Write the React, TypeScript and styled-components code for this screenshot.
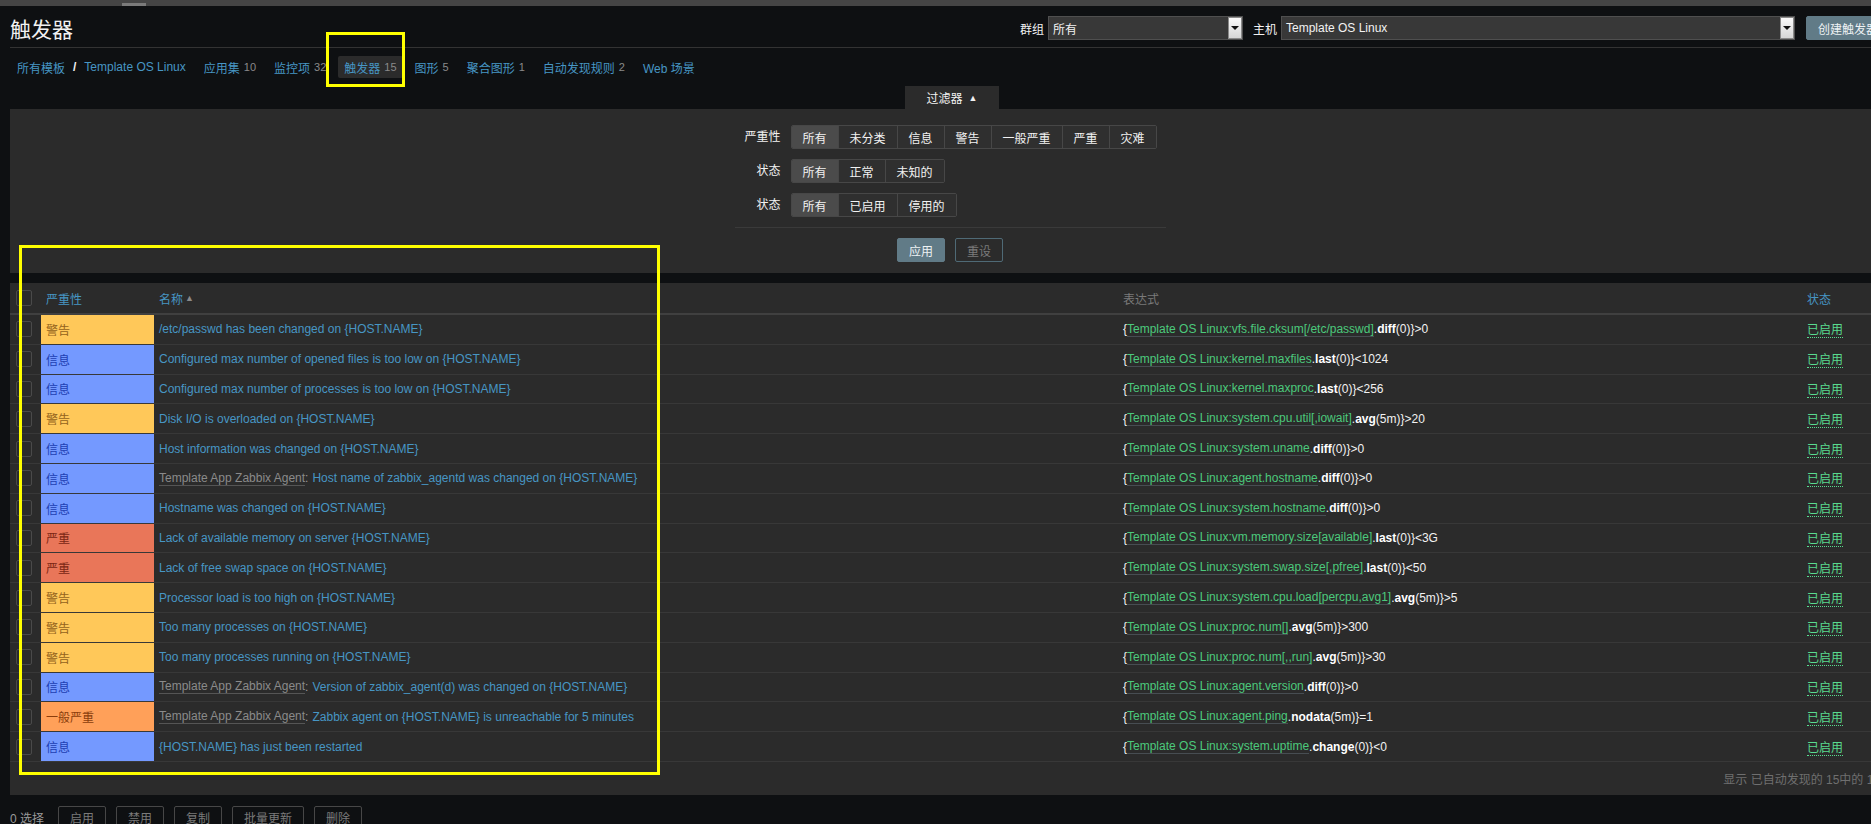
import React from 'react'
import styled, { createGlobalStyle } from 'styled-components'

const GlobalStyle = createGlobalStyle`
  html, body {
    margin: 0;
    padding: 0;
    background: #0e1012;
    overflow: hidden;
  }
  body {
    font-family: 'Liberation Sans', Arial, 'Noto Sans CJK SC', sans-serif;
    font-size: 12px;
    color: #f2f2f2;
  }
`

const Page = styled.div`
  position: relative;
  width: 1900px;
  min-height: 824px;
`

const TopStrip = styled.div`
  display: flex;
  align-items: flex-end;
  height: 6px;
  padding-left: 122px;
  background: #454545;
`

const StripMark = styled.div`
  width: 24px;
  height: 3px;
  background: #7a7a7a;
`

const Header = styled.header`
  display: flex;
  align-items: center;
  justify-content: space-between;
  height: 42px;
  box-sizing: border-box;
  padding-top: 3px;
  margin: 0 10px;
  border-bottom: 1px solid #333;
`

const Title = styled.h1`
  margin: 0;
  font-size: 21px;
  font-weight: normal;
  line-height: 1;
  color: #f2f2f2;
  font-family: 'Noto Sans CJK SC', sans-serif;
`

const Controls = styled.div`
  display: flex;
  align-items: center;
`

const CtrlLabel = styled.span`
  margin: 0 4px 0 10px;
  color: #f2f2f2;
`

const Select = styled.div<{ $w: number }>`
  display: flex;
  align-items: center;
  justify-content: space-between;
  width: ${p => p.$w}px;
  height: 24px;
  box-sizing: border-box;
  background: #383838;
  border: 1px solid #4f4f4f;
  padding-left: 4px;
  color: #f2f2f2;
`

const SelectArrow = styled.span`
  display: flex;
  align-items: center;
  justify-content: center;
  width: 14px;
  height: 22px;
  box-sizing: border-box;
  background: linear-gradient(#fafafa, #d6d6d6);
  border: 1px solid #8a8a8a;

  &::after {
    content: '';
    border-left: 4px solid transparent;
    border-right: 4px solid transparent;
    border-top: 4px solid #111;
  }
`

const PrimaryButton = styled.button`
  height: 24px;
  padding: 0 11px;
  border: 1px solid #617b87;
  border-radius: 2px;
  background: #617b87;
  color: #eef2f4;
  font: inherit;
  white-space: nowrap;
`

const CreateButton = styled(PrimaryButton)`
  margin-left: 11px;
`

const GhostButton = styled.button`
  height: 24px;
  padding: 0 11px;
  border: 1px solid #4f6a76;
  border-radius: 2px;
  background: transparent;
  color: #7a7a7a;
  font: inherit;
`

const Nav = styled.nav`
  display: flex;
  align-items: center;
  height: 22px;
  padding: 8px 10px;
`

const Crumbs = styled.div`
  display: flex;
  align-items: center;
  gap: 8px;
  padding: 0 6px 0 7px;
  margin-right: 6px;
`

const Slash = styled.span`
  color: #f2f2f2;
  font-weight: bold;
`

const NavLink = styled.a`
  color: #4796c4;
  text-decoration: none;
`

const NavItem = styled.div<{ $active?: boolean }>`
  display: flex;
  align-items: center;
  height: 22px;
  padding: 0 6px;
  margin-right: 6px;
  border-radius: 2px;
  background: ${p => (p.$active ? '#2b2b2b' : 'transparent')};
`

const Count = styled.span`
  margin-left: 4px;
  font-size: 11px;
  color: #8a8a8a;
`

const FilterTabRow = styled.div`
  display: flex;
  justify-content: center;
  padding-left: 4px;
`

const FilterTab = styled.div`
  display: flex;
  align-items: center;
  justify-content: center;
  gap: 6px;
  width: 94px;
  height: 23px;
  background: #2b2b2b;
  color: #f2f2f2;
`

const Caret = styled.span`
  font-size: 9px;
`

const FilterPanel = styled.section`
  margin: 0 10px;
  padding: 16px 0 11px;
  background: #2b2b2b;
`

const FilterForm = styled.div`
  display: grid;
  grid-template-columns: 46px 375px;
  column-gap: 10px;
  row-gap: 10px;
  width: 431px;
  margin: 0 auto;
`

const FieldLabel = styled.div`
  line-height: 24px;
  text-align: right;
`

const Segmented = styled.div`
  display: inline-flex;
  justify-self: start;
  height: 24px;
  box-sizing: border-box;
  border: 1px solid #474747;
  border-radius: 2px;
  overflow: hidden;
`

const Segment = styled.span<{ $on?: boolean }>`
  display: flex;
  align-items: center;
  padding: 0 11px;
  background: ${p => (p.$on ? '#4b4b4b' : '#2f2f2f')};
  color: #f2f2f2;

  & + & {
    border-left: 1px solid #474747;
  }
`

const FilterFoot = styled.div`
  display: flex;
  justify-content: center;
  gap: 10px;
  width: 431px;
  margin: 10px auto 0;
  padding-top: 10px;
  border-top: 1px solid #3a3a3a;
`

const TablePanel = styled.section`
  margin: 10px 10px 0;
  background: #2b2b2b;
`

const cols = '31px 113px 964px 684px 1fr'

const HeadRow = styled.div`
  display: grid;
  grid-template-columns: ${cols};
  align-items: center;
  height: 32px;
  box-sizing: border-box;
  border-bottom: 2px solid #404040;
`

const Row = styled.div`
  display: grid;
  grid-template-columns: ${cols};
  align-items: stretch;
  height: 29.8px;
  box-sizing: border-box;
  border-bottom: 1px solid #383838;
`

const Cell = styled.div`
  display: flex;
  align-items: center;
  padding-left: 5px;
  white-space: nowrap;
  overflow: hidden;
`

const CheckCell = styled.div`
  display: flex;
  align-items: center;
  padding-left: 6px;
`

const Checkbox = styled.span`
  width: 16px;
  height: 16px;
  box-sizing: border-box;
  border: 1px solid #4a4a4a;
  border-radius: 2px;
  background: #2b2b2b;
`

const HeadText = styled.span<{ $link?: boolean }>`
  color: ${p => (p.$link ? '#4796c4' : '#7a7a7a')};
`

const SortArrow = styled.span`
  margin-left: 2px;
  font-size: 9px;
  color: #8a8a8a;
`

const severity = {
  info: { label: '信息', bg: '#7499ff', fg: '#1d3fb3' },
  warning: { label: '警告', bg: '#ffc859', fg: '#94631c' },
  average: { label: '一般严重', bg: '#ffa059', fg: '#8a3d0c' },
  high: { label: '严重', bg: '#e97659', fg: '#7a2614' },
}

type Sev = keyof typeof severity

const SevCell = styled(Cell)<{ $sev: Sev }>`
  background: ${p => severity[p.$sev].bg};
  color: ${p => severity[p.$sev].fg};
`

const TemplateRef = styled.a`
  color: #8a8a8a;
  text-decoration: none;
  border-bottom: 1px solid #555;
`

const Colon = styled.span`
  color: #9a9a9a;
  margin-right: 4px;
`

const NameLink = styled.a`
  color: #4796c4;
  text-decoration: none;
`

const ExprText = styled.span`
  color: #f2f2f2;
`

const ItemLink = styled.a`
  color: #4cc97c;
  text-decoration: none;
  border-bottom: 1px solid #474d52;
`

const Fn = styled.b`
  color: #fff;
`

const StatusLink = styled.a`
  color: #59db8f;
  text-decoration: none;
  border-bottom: 1px dotted #59db8f;
`

const TableFoot = styled.div`
  display: flex;
  align-items: center;
  justify-content: flex-end;
  height: 33px;
  padding-right: 10px;
  color: #6f6f6f;
`

const ActionBar = styled.div`
  display: flex;
  align-items: center;
  gap: 10px;
  padding: 11px 10px;
`

const Selected = styled.span`
  margin-right: 4px;
  color: #9a9a9a;
`

const ActionButton = styled.button`
  height: 24px;
  padding: 0 11px;
  border: 1px solid #474747;
  border-radius: 2px;
  background: transparent;
  color: #7a7a7a;
  font: inherit;
`

const Annotation = styled.div<{ $x: number; $y: number; $w: number; $h: number }>`
  position: absolute;
  left: ${p => p.$x}px;
  top: ${p => p.$y}px;
  width: ${p => p.$w}px;
  height: ${p => p.$h}px;
  box-sizing: border-box;
  border: 3px solid #ffff00;
  pointer-events: none;
`

type Trigger = {
  sev: Sev
  tpl?: string
  name: string
  item: string
  fn: string
  rest: string
}

const triggers: Trigger[] = [
  { sev: 'warning', name: '/etc/passwd has been changed on {HOST.NAME}', item: 'vfs.file.cksum[/etc/passwd]', fn: 'diff', rest: '(0)}>0' },
  { sev: 'info', name: 'Configured max number of opened files is too low on {HOST.NAME}', item: 'kernel.maxfiles', fn: 'last', rest: '(0)}<1024' },
  { sev: 'info', name: 'Configured max number of processes is too low on {HOST.NAME}', item: 'kernel.maxproc', fn: 'last', rest: '(0)}<256' },
  { sev: 'warning', name: 'Disk I/O is overloaded on {HOST.NAME}', item: 'system.cpu.util[,iowait]', fn: 'avg', rest: '(5m)}>20' },
  { sev: 'info', name: 'Host information was changed on {HOST.NAME}', item: 'system.uname', fn: 'diff', rest: '(0)}>0' },
  { sev: 'info', tpl: 'Template App Zabbix Agent', name: 'Host name of zabbix_agentd was changed on {HOST.NAME}', item: 'agent.hostname', fn: 'diff', rest: '(0)}>0' },
  { sev: 'info', name: 'Hostname was changed on {HOST.NAME}', item: 'system.hostname', fn: 'diff', rest: '(0)}>0' },
  { sev: 'high', name: 'Lack of available memory on server {HOST.NAME}', item: 'vm.memory.size[available]', fn: 'last', rest: '(0)}<3G' },
  { sev: 'high', name: 'Lack of free swap space on {HOST.NAME}', item: 'system.swap.size[,pfree]', fn: 'last', rest: '(0)}<50' },
  { sev: 'warning', name: 'Processor load is too high on {HOST.NAME}', item: 'system.cpu.load[percpu,avg1]', fn: 'avg', rest: '(5m)}>5' },
  { sev: 'warning', name: 'Too many processes on {HOST.NAME}', item: 'proc.num[]', fn: 'avg', rest: '(5m)}>300' },
  { sev: 'warning', name: 'Too many processes running on {HOST.NAME}', item: 'proc.num[,,run]', fn: 'avg', rest: '(5m)}>30' },
  { sev: 'info', tpl: 'Template App Zabbix Agent', name: 'Version of zabbix_agent(d) was changed on {HOST.NAME}', item: 'agent.version', fn: 'diff', rest: '(0)}>0' },
  { sev: 'average', tpl: 'Template App Zabbix Agent', name: 'Zabbix agent on {HOST.NAME} is unreachable for 5 minutes', item: 'agent.ping', fn: 'nodata', rest: '(5m)}=1' },
  { sev: 'info', name: '{HOST.NAME} has just been restarted', item: 'system.uptime', fn: 'change', rest: '(0)}<0' },
]

const navItems = [
  { label: '应用集', count: '10' },
  { label: '监控项', count: '32' },
  { label: '触发器', count: '15', active: true },
  { label: '图形', count: '5' },
  { label: '聚合图形', count: '1' },
  { label: '自动发现规则', count: '2' },
  { label: 'Web 场景' },
]

const filterRows = [
  { label: '严重性', options: ['所有', '未分类', '信息', '警告', '一般严重', '严重', '灾难'] },
  { label: '状态', options: ['所有', '正常', '未知的'] },
  { label: '状态', options: ['所有', '已启用', '停用的'] },
]

export default function App() {
  return (
    <Page>
      <GlobalStyle />
      <TopStrip>
        <StripMark />
      </TopStrip>

      <Header>
        <Title>触发器</Title>
        <Controls>
          <CtrlLabel>群组</CtrlLabel>
          <Select $w={195}>
            所有
            <SelectArrow />
          </Select>
          <CtrlLabel>主机</CtrlLabel>
          <Select $w={514}>
            Template OS Linux
            <SelectArrow />
          </Select>
          <CreateButton>创建触发器</CreateButton>
        </Controls>
      </Header>

      <Nav>
        <Crumbs>
          <NavLink href="#">所有模板</NavLink>
          <Slash>/</Slash>
          <NavLink href="#">Template OS Linux</NavLink>
        </Crumbs>
        {navItems.map(n => (
          <NavItem key={n.label} $active={n.active}>
            <NavLink href="#">{n.label}</NavLink>
            {n.count && <Count>{n.count}</Count>}
          </NavItem>
        ))}
      </Nav>

      <FilterTabRow>
        <FilterTab>
          过滤器 <Caret>▲</Caret>
        </FilterTab>
      </FilterTabRow>

      <FilterPanel>
        <FilterForm>
          {filterRows.map((r, i) => (
            <React.Fragment key={i}>
              <FieldLabel>{r.label}</FieldLabel>
              <Segmented>
                {r.options.map((o, j) => (
                  <Segment key={o} $on={j === 0}>{o}</Segment>
                ))}
              </Segmented>
            </React.Fragment>
          ))}
        </FilterForm>
        <FilterFoot>
          <PrimaryButton>应用</PrimaryButton>
          <GhostButton>重设</GhostButton>
        </FilterFoot>
      </FilterPanel>

      <TablePanel>
        <HeadRow>
          <CheckCell>
            <Checkbox />
          </CheckCell>
          <Cell>
            <HeadText $link>严重性</HeadText>
          </Cell>
          <Cell>
            <HeadText $link>名称</HeadText>
            <SortArrow>▲</SortArrow>
          </Cell>
          <Cell>
            <HeadText>表达式</HeadText>
          </Cell>
          <Cell>
            <HeadText $link>状态</HeadText>
          </Cell>
        </HeadRow>

        {triggers.map((t, i) => (
          <Row key={i}>
            <CheckCell>
              <Checkbox />
            </CheckCell>
            <SevCell $sev={t.sev}>{severity[t.sev].label}</SevCell>
            <Cell>
              {t.tpl && (
                <>
                  <TemplateRef href="#">{t.tpl}</TemplateRef>
                  <Colon>:</Colon>
                </>
              )}
              <NameLink href="#">{t.name}</NameLink>
            </Cell>
            <Cell>
              <ExprText>{'{'}</ExprText>
              <ItemLink href="#">Template OS Linux:{t.item}</ItemLink>
              <ExprText>.</ExprText>
              <Fn>{t.fn}</Fn>
              <ExprText>{t.rest}</ExprText>
            </Cell>
            <Cell>
              <StatusLink href="#">已启用</StatusLink>
            </Cell>
          </Row>
        ))}

        <TableFoot>显示 已自动发现的 15中的 15</TableFoot>
      </TablePanel>

      <ActionBar>
        <Selected>0 选择</Selected>
        <ActionButton>启用</ActionButton>
        <ActionButton>禁用</ActionButton>
        <ActionButton>复制</ActionButton>
        <ActionButton>批量更新</ActionButton>
        <ActionButton>删除</ActionButton>
      </ActionBar>

      <Annotation $x={326} $y={32} $w={79} $h={55} />
      <Annotation $x={19} $y={245} $w={641} $h={530} />
    </Page>
  )
}
